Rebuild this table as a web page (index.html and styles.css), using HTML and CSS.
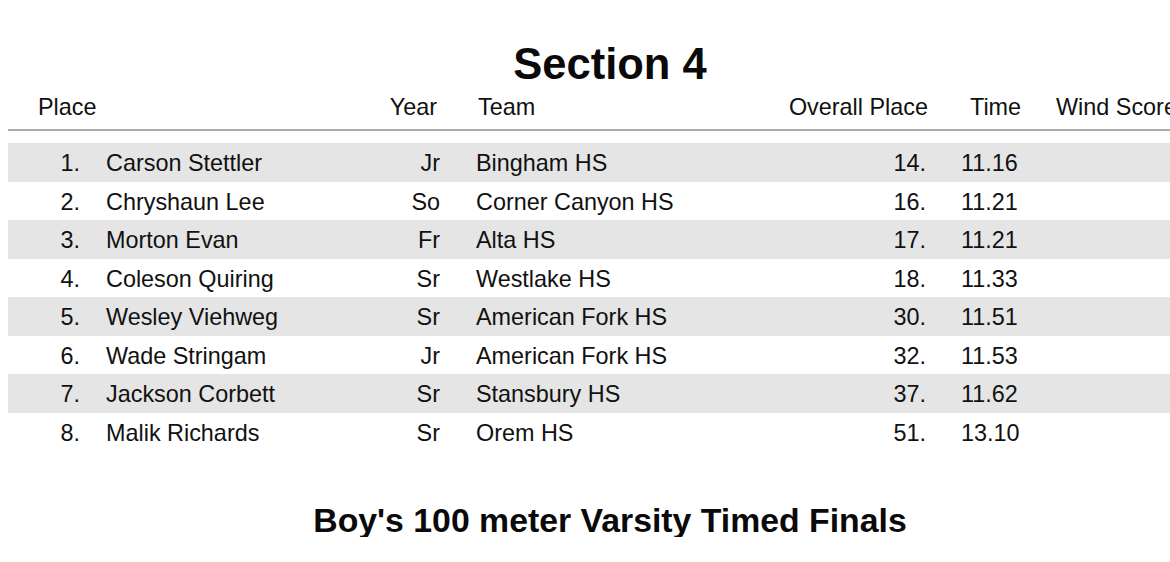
FILE: index.html
```html
<!DOCTYPE html>
<html>
<head>
<meta charset="utf-8">
<link rel="stylesheet" href="styles.css">
</head>
<body>
<div class="page">
  <h1 class="title">Section 4</h1>
  <div class="results">
    <div class="row head">
      <div class="c-place">Place</div>
      <div class="c-name"></div>
      <div class="c-year">Year</div>
      <div class="c-team">Team</div>
      <div class="c-overall">Overall Place</div>
      <div class="c-time">Time</div>
      <div class="c-wind">Wind Score</div>
    </div>
    <div class="body">
      <div class="row"><div class="c-place">1.</div><div class="c-name">Carson Stettler</div><div class="c-year">Jr</div><div class="c-team">Bingham HS</div><div class="c-overall">14.</div><div class="c-time">11.16</div><div class="c-wind"></div></div>
      <div class="row"><div class="c-place">2.</div><div class="c-name">Chryshaun Lee</div><div class="c-year">So</div><div class="c-team">Corner Canyon HS</div><div class="c-overall">16.</div><div class="c-time">11.21</div><div class="c-wind"></div></div>
      <div class="row"><div class="c-place">3.</div><div class="c-name">Morton Evan</div><div class="c-year">Fr</div><div class="c-team">Alta HS</div><div class="c-overall">17.</div><div class="c-time">11.21</div><div class="c-wind"></div></div>
      <div class="row"><div class="c-place">4.</div><div class="c-name">Coleson Quiring</div><div class="c-year">Sr</div><div class="c-team">Westlake HS</div><div class="c-overall">18.</div><div class="c-time">11.33</div><div class="c-wind"></div></div>
      <div class="row"><div class="c-place">5.</div><div class="c-name">Wesley Viehweg</div><div class="c-year">Sr</div><div class="c-team">American Fork HS</div><div class="c-overall">30.</div><div class="c-time">11.51</div><div class="c-wind"></div></div>
      <div class="row"><div class="c-place">6.</div><div class="c-name">Wade Stringam</div><div class="c-year">Jr</div><div class="c-team">American Fork HS</div><div class="c-overall">32.</div><div class="c-time">11.53</div><div class="c-wind"></div></div>
      <div class="row"><div class="c-place">7.</div><div class="c-name">Jackson Corbett</div><div class="c-year">Sr</div><div class="c-team">Stansbury HS</div><div class="c-overall">37.</div><div class="c-time">11.62</div><div class="c-wind"></div></div>
      <div class="row"><div class="c-place">8.</div><div class="c-name">Malik Richards</div><div class="c-year">Sr</div><div class="c-team">Orem HS</div><div class="c-overall">51.</div><div class="c-time">13.10</div><div class="c-wind"></div></div>
    </div>
  </div>
  <h2 class="event">Boy's 100 meter Varsity Timed Finals</h2>
</div>
</body>
</html>
```

FILE: styles.css
```css
html, body {
  margin: 0;
  padding: 0;
  background: #ffffff;
  overflow: hidden;
}

body {
  font-family: "Liberation Sans", Arial, Helvetica, sans-serif;
  color: #111111;
}

.page {
  width: 1204px;
  padding: 0 8px;
}

.title {
  margin: 43px 0 0;
  font-size: 43.5px;
  line-height: 43px;
  font-weight: bold;
  text-align: center;
  color: #0a0a0a;
}

.results {
  margin-top: 7px;
}

.row {
  display: grid;
  grid-template-columns: 92px 280px 68px 287px 200px 95px 182px;
  font-size: 23.4px;
}

.head {
  line-height: 28px;
  padding-bottom: 8px;
  border-bottom: 2px solid #ababab;
}

.body {
  margin-top: 12px;
}

.body .row {
  height: 38.57px;
  line-height: 38.57px;
  padding-top: 1px;
  box-sizing: border-box;
}

.body .row:nth-child(odd) {
  background: #e5e5e5;
}

.c-place { text-align: right; padding-right: 20px; }
.head .c-place { text-align: left; padding: 0 0 0 30px; }

.c-name { padding-left: 6px; white-space: nowrap; }

.c-year { text-align: right; padding-right: 8px; }
.head .c-year { padding-right: 11px; }

.c-team { padding-left: 28px; white-space: nowrap; }
.head .c-team { padding-left: 30px; }

.c-overall { text-align: right; padding-right: 9px; }
.head .c-overall { padding-right: 7px; }

.c-time { padding-left: 26px; }
.head .c-time { padding-left: 35px; }

.c-wind { padding-left: 26px; white-space: nowrap; }

.event {
  margin: 51px 0 0;
  font-size: 33.8px;
  line-height: 34px;
  font-weight: bold;
  text-align: center;
  color: #0a0a0a;
}
```
